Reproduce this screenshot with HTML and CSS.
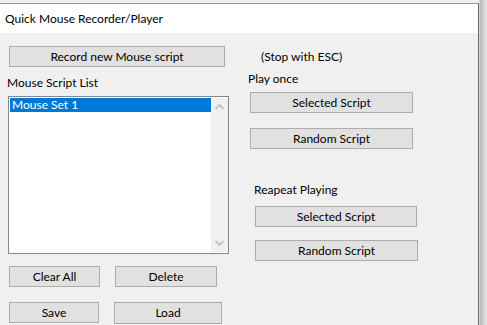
FILE: index.html
```html
<!DOCTYPE html>
<html lang="en">
<head>
    <meta charset="UTF-8">
    <meta name="viewport" content="width=device-width, initial-scale=1.0">
    <title>Quick Mouse Recorder/Player</title>
    <link rel="stylesheet" href="styles.css">
</head>
<body>
    <div class="window">
        <div class="titlebar">Quick Mouse Recorder/Player</div>
        <div class="client">
            <div class="col-left">
                <button class="btn btn-record">Record new Mouse script</button>
                <div class="label list-label">Mouse Script List</div>
                <div class="listbox">
                    <div class="list-items">
                        <div class="list-item selected">Mouse Set 1</div>
                    </div>
                    <div class="scrollbar">
                        <svg class="arrow" width="9" height="6" viewBox="0 0 9 6"><path d="M0.5 5 L4.5 1 L8.5 5" fill="none" stroke="#c4c4c4" stroke-width="2"/></svg>
                        <svg class="arrow" width="9" height="6" viewBox="0 0 9 6"><path d="M0.5 1 L4.5 5 L8.5 1" fill="none" stroke="#c4c4c4" stroke-width="2"/></svg>
                    </div>
                </div>
                <div class="row row-edit">
                    <button class="btn btn-clear">Clear All</button>
                    <button class="btn btn-delete">Delete</button>
                </div>
                <div class="row row-file">
                    <button class="btn btn-save">Save</button>
                    <button class="btn btn-load">Load</button>
                </div>
            </div>
            <div class="col-right">
                <div class="label stop-hint">(Stop with ESC)</div>
                <div class="label once-label">Play once</div>
                <button class="btn btn-once">Selected Script</button>
                <button class="btn btn-once btn-gap">Random Script</button>
                <div class="label repeat-label">Reapeat Playing</div>
                <button class="btn btn-repeat">Selected Script</button>
                <button class="btn btn-repeat btn-gap2">Random Script</button>
            </div>
        </div>
    </div>
</body>
</html>
```

FILE: styles.css
```css
html, body { margin: 0; height: 100%; }
body {
    background: linear-gradient(to right, #f0f0f0 0, #f0f0f0 479px, #b8b8b8 480px, #e6e6e6 487px);
    font-family: Lato, "Segoe UI", sans-serif;
    font-size: 12px;
    color: #000;
    overflow: hidden;
}
.window {
    width: 478px;
    margin-top: 3px;
    height: 322px;
    border-top: 1px solid #9a9a9a;
    border-right: 1px solid #6a6a6a;
    background: #f0f0f0;
    display: flex;
    flex-direction: column;
}
.titlebar {
    height: 29px;
    line-height: 29px;
    background: #fff;
    padding-left: 5px;
}
.client { display: flex; flex: 1; }
.col-left { width: 229px; display: flex; flex-direction: column; align-items: flex-start; }
.col-right { margin-left: 19px; display: flex; flex-direction: column; align-items: flex-start; }

.btn {
    font: inherit;
    color: #000;
    background: #e1e1e1;
    border: 1px solid #adadad;
    height: 21px;
    padding: 0;
    line-height: 18px;
    box-sizing: border-box;
}
.label { line-height: 15px; white-space: nowrap; }

.btn-record { margin: 13px 0 0 9px; width: 216px; }
.list-label { margin: 8px 0 0 7px; }
.listbox {
    margin: 6px 0 0 8px;
    width: 221px;
    height: 158px;
    box-sizing: border-box;
    border: 1px solid #828790;
    background: #fff;
    display: flex;
    padding: 1px 0 1px 1px;
}
.list-items { flex: 1; }
.list-item { height: 14px; line-height: 14px; padding-left: 2px; }
.list-item.selected { background: #0078d7; color: #fff; }
.scrollbar {
    width: 17px;
    background: #f0f0f0;
    display: flex;
    flex-direction: column;
    justify-content: space-between;
    align-items: center;
    padding: 6px 0 6px;
}
.row { display: flex; }
.row-edit { margin-top: 12px; }
.btn-clear { margin-left: 9px; width: 91px; }
.btn-delete { margin-left: 15px; width: 102px; }
.row-file { margin-top: 15px; }
.btn-save { margin-left: 9px; width: 90px; }
.btn-load { margin-left: 15px; width: 108px; height: 22px; }

.stop-hint { margin: 16px 0 0 13px; }
.once-label { margin-top: 7px; }
.btn-once { margin: 6px 0 0 2px; width: 163px; }
.btn-gap { margin-top: 15px; }
.repeat-label { margin: 33px 0 0 6px; }
.btn-repeat { margin: 9px 0 0 7px; width: 162px; }
.btn-gap2 { margin-top: 13px; width: 163px; }
```
